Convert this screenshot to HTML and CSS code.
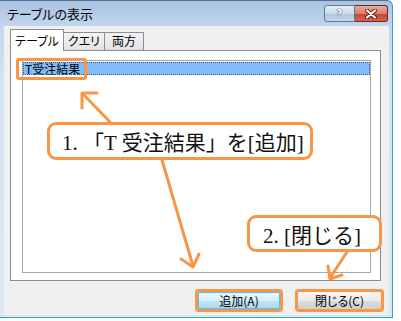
FILE: index.html
```html
<!DOCTYPE html>
<html lang="ja">
<head>
    <meta charset="UTF-8">
    <title>テーブルの表示</title>
    <link rel="stylesheet" href="styles.css">
</head>
<body>

<div class="window">
    <div class="titlebar">
        <span class="title">テーブルの表示</span>
        <div class="caption">
            <span class="cap cap-help">?</span>
            <span class="cap cap-close">
                <svg width="14" height="10" viewBox="0 0 14 10">
                    <path d="M3 1.5 L11 8.5 M11 1.5 L3 8.5" stroke="#5a1c12" stroke-width="4" stroke-linecap="round"/>
                    <path d="M3 1.5 L11 8.5 M11 1.5 L3 8.5" stroke="#fff" stroke-width="2.2" stroke-linecap="round"/>
                </svg>
            </span>
        </div>
    </div>

    <div class="client">
        <div class="tabs">
            <span class="tab active">テーブル</span>
            <span class="tab">クエリ</span>
            <span class="tab">両方</span>
        </div>
        <div class="panel">
            <div class="list">
                <div class="row selected">T受注結果</div>
            </div>
        </div>
        <div class="buttons">
            <button class="btn btn-default mark">追加(A)</button>
            <button class="btn mark">閉じる(C)</button>
        </div>
    </div>
</div>

<!-- annotations -->
<svg class="arrows" width="401" height="321" viewBox="0 0 401 321">
    <g stroke="#f79646" stroke-width="3" fill="none" stroke-linecap="round" stroke-linejoin="round">
        <path d="M110 122 L83 94"/>
        <path d="M97 93 L82 93 L82 108"/>
        <path d="M162 160 L193 266"/>
        <path d="M181 259 L193 267 L199 254"/>
        <path d="M347 252 L330 278"/>
        <path d="M328 266 L330 279 L342 275"/>
    </g>
</svg>
<div class="hilite hilite-row"></div>
<div class="callout callout-1">1. 「T 受注結果」を[追加]</div>
<div class="callout callout-2">2. [閉じる]</div>

</body>
</html>
```

FILE: styles.css
```css
body {
    margin: 0;
    background: #fff;
    font-family: "Noto Sans CJK JP", sans-serif;
    font-feature-settings: "palt";
}
.window {
    box-sizing: border-box;
    width: 393px;
    height: 318px;
    display: flex;
    flex-direction: column;
    border-top: 1px solid #5d6f83;
    border-right: 1px solid #2ea2c8;
    border-bottom: 1px solid #2ea2c8;
    border-top-right-radius: 6px;
    background: linear-gradient(#a7c3e2, #c2d6ec 25px, #d6e3f1 80px, #dde7f1);
}
.titlebar {
    height: 25px;
    display: flex;
    justify-content: space-between;
    align-items: flex-start;
    padding: 0 4px 0 7px;
}
.title {
    font-size: 13px;
    line-height: 25px;
    color: #000;
}
.caption {
    display: flex;
    margin-top: 4px;
}
.cap {
    box-sizing: border-box;
    height: 17px;
    display: flex;
    align-items: center;
    justify-content: center;
}
.cap-help {
    width: 31px;
    border: 1px solid #5f7896;
    border-radius: 3px 0 0 3px;
    background: linear-gradient(#e4edf7, #c9d9ec 50%, #adc4df 51%, #c2d6ec);
    font: bold 11px "DejaVu Sans", sans-serif;
    color: #fff;
    text-shadow: 0 0 1px #2c3e55, 0 0 1px #2c3e55;
}
.cap-close {
    width: 33px;
    border: 1px solid #6e2a20;
    border-left: none;
    border-radius: 0 3px 3px 0;
    background: linear-gradient(#e9ab9b, #d8806a 50%, #c4462c 51%, #d0654a);
}
.client {
    flex: 1;
    margin: 0 3px 2px 4px;
    padding: 3px 8px 0 6px;
    background: #f0f0f0;
}
.tabs {
    display: flex;
    align-items: flex-end;
    height: 21px;
}
.tab {
    box-sizing: border-box;
    height: 18px;
    margin-left: -1px;
    border: 1px solid #8c8e94;
    border-bottom: none;
    background: linear-gradient(#f3f3f3, #e2e2e2);
    font-size: 12px;
    line-height: 16px;
    text-align: center;
    color: #000;
}
.tab:nth-child(2) { width: 42px; }
.tab:nth-child(3) { width: 40px; }
.tab.active {
    position: relative;
    z-index: 1;
    width: 54px;
    height: 22px;
    margin: 0 0 -1px 0;
    background: #fff;
    line-height: 22px;
}
.panel {
    box-sizing: border-box;
    width: 371px;
    height: 231px;
    padding: 9px 9px 7px 11px;
    border: 1px solid #898c95;
    background: #fff;
}
.list {
    height: 100%;
    box-sizing: border-box;
    border: 1px solid #a5a8ae;
    padding: 1px 0 0 0;
}
.row {
    height: 13px;
    font-size: 12px;
    line-height: 13px;
    padding-left: 2px;
    color: #000;
}
.row.selected {
    background: #83bdf7;
    outline: 1px dotted #3d5a80;
    outline-offset: -1px;
}
.buttons {
    display: flex;
    justify-content: flex-end;
    gap: 16px;
    margin: 10px -1px 0 0;
}
.btn {
    box-sizing: border-box;
    width: 84px;
    height: 19px;
    padding: 0;
    border: 1px solid #707070;
    border-radius: 2px;
    background: linear-gradient(#f4f4f4, #ebebeb 50%, #dddddd 51%, #cfcfcf);
    font: 12px "Noto Sans CJK JP", sans-serif;
    font-feature-settings: "palt";
    color: #000;
}
.btn + .btn { width: 85px; }
.btn-default {
    background: linear-gradient(#eaf6fd, #d9f0fc 50%, #bee6fd 51%, #a7d9f5);
    box-shadow: inset 0 0 0 1px #54c3ef;
}
.mark {
    border-color: #f79646;
    outline: 2px solid #f79646;
}
.btn-default.mark {
    box-shadow: inset 0 0 0 1px #54c3ef;
}
.arrows {
    position: absolute;
    left: 0;
    top: 0;
}
.hilite {
    position: absolute;
    box-sizing: border-box;
    border: 3px solid #f79646;
    border-radius: 3px;
}
.hilite-row {
    left: 16px;
    top: 58px;
    width: 71px;
    height: 22px;
}
.callout {
    position: absolute;
    box-sizing: border-box;
    display: flex;
    align-items: center;
    border: 3px solid #f79646;
    border-radius: 9px;
    background: #fff;
    font-family: "Liberation Serif", "Noto Sans CJK JP", serif;
    font-feature-settings: normal;
    font-size: 21px;
    color: #111;
    white-space: nowrap;
}
.callout-1 {
    left: 47px;
    top: 122px;
    width: 266px;
    height: 38px;
    padding-left: 12px;
}
.callout-2 {
    left: 247px;
    top: 215px;
    width: 135px;
    height: 37px;
    padding-left: 13px;
}
```
